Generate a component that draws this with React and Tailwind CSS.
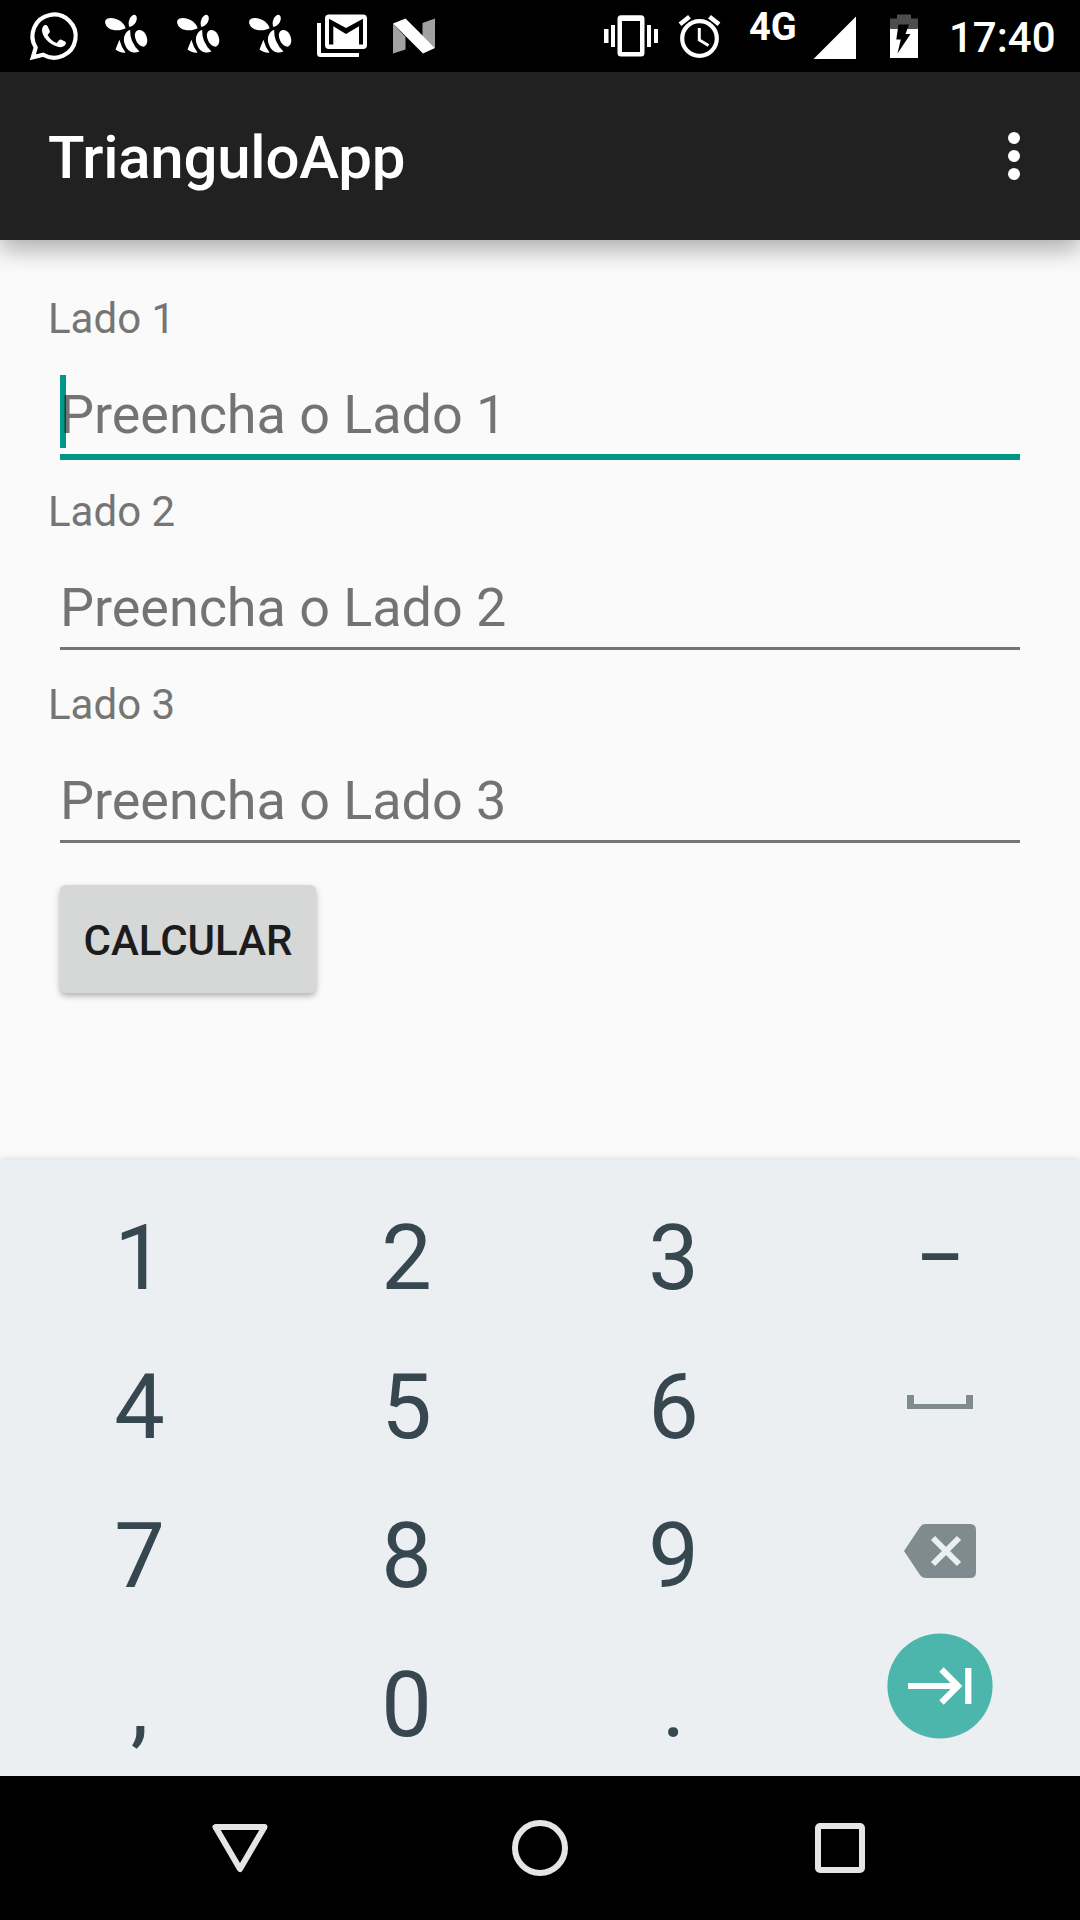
import React from "react";

const Call = () => (
  <svg className="h-[72px] w-[102px]" viewBox="0 0 102 72">
    <path d="M35.700 47.500A21.600 21.600 0 1 1 43.200 54.800L32.800 57.400Z" fill="none" stroke="#fff" strokeWidth="4.200" />
    <path d="M42 30.500C42 27 43.500 25 45.800 25Q47 25 47.600 26.300L49.700 30.800Q50.200 32 49.200 33.100L47.600 35Q50.800 40.800 56.700 43L59.300 40Q60 39.200 61 39.600L65.400 41.700Q66.200 42.200 65.900 43.300 65 47 60.500 47.200C54 47 42.500 39.500 42 30.500Z" fill="#fff" />
  </svg>
);

const Bee = () => (
  <svg className="h-[72px] w-[72px]" viewBox="102 0 72 72" fill="#fff">
    <path d="M105 21.500C106 16.500 115 17 121 21.500Q124.500 24.500 125.700 28.300C119 31.800 105.500 31.500 105 21.500Z" />
    <path d="M129.500 27C126.700 22 131 14.500 134.700 14.800 138.500 15.500 137.500 25 129.500 27Z" />
    <path d="M119.400 39.800Q121.500 47.500 125.500 52.600 119.500 53 115.500 49.500Z" />
    <path d="M130.200 30Q129.500 42 139.500 51.500C134 54 127.500 52.500 124.500 43.500 122.800 37.500 125.200 31 130.200 30Z" />
    <path d="M134.800 34.500C136 28 143 28.800 146 35 148.500 41 147 45.700 143.500 46.700 138.500 46 135 41 134.800 34.500Z" />
  </svg>
);

const Gmail = () => (
  <svg className="h-[72px] w-[72px]" viewBox="312 0 72 72">
    <path d="M319 23V53.500Q319 55 320.500 55H359" fill="none" stroke="#fff" strokeWidth="4" />
    <rect x="325" y="14.500" width="42" height="34.500" rx="4" fill="#fff" />
    <path d="M329 44.500V18.800L346 28 363 18.800V44.500H359V26.200L346 34 333.300 26.200V44.500Z" fill="#000" />
  </svg>
);

const Nougat = () => (
  <svg className="h-[72px] w-[72px]" viewBox="384 0 72 72">
    <path d="M393 23.500L405.500 37V49.500L393 53.500ZM422.500 23L435 18.500V48L422.500 36Z" fill="#a1a1a1" />
    <path d="M393 23.500L405.500 18.500 435 48 423 53.500Z" fill="#fff" />
  </svg>
);

const Vibrate = () => (
  <svg className="h-[72px] w-[72px]" viewBox="595 0 72 72" fill="#fff">
    <path fillRule="evenodd" d="M621 15.300H641Q644.500 15.300 644.500 19V53Q644.500 56.500 641 56.500H621Q617.500 56.500 617.500 53V19Q617.500 15.300 621 15.300ZM622 21V52H640V21Z" />
    <path d="M604 29h4.500v14H604ZM611 25h4v22h-4ZM647 25h4v22h-4ZM654 29h4v14h-4Z" />
  </svg>
);

const Alarm = () => (
  <svg className="h-[72px] w-[72px]" viewBox="663 0 72 72" fill="none" stroke="#fff">
    <circle cx="699.500" cy="38.500" r="17.300" strokeWidth="4.200" />
    <path d="M680 24.300L689.500 16.700M719 24.300L709.500 16.700" strokeWidth="4.500" />
    <path d="M699.300 28V40L708.500 45.500" strokeWidth="3" />
  </svg>
);

const Signal = () => (
  <svg className="h-[72px] w-[50px]" viewBox="811 0 50 72">
    <path d="M813.500 59L856 16.500V59Z" fill="#fff" />
  </svg>
);

const Battery = () => (
  <svg className="h-[72px] w-[48px]" viewBox="880 0 48 72">
    <path d="M890 29V18.500H897V14.500H911V18.500H918V29Z" fill="#4d4d4d" />
    <path d="M890 29H918V58H890Z" fill="#fff" />
    <path d="M898.500 24.500H909L905.500 34H910.500L897.500 53.500 900.800 39.500H896.300Z" fill="#000" />
  </svg>
);

function StatusBar() {
  return (
    <header className="flex h-[72px] items-start bg-black text-white">
      <Call />
      <Bee />
      <Bee />
      <Bee />
      <div className="-ml-[6px] flex">
        <Gmail />
        <Nougat />
      </div>
      <div className="ml-auto flex items-start">
        <Vibrate />
        <div className="-ml-1">
          <Alarm />
        </div>
        <span className="ml-[14px] mt-1 w-[49px] text-[38px] font-bold leading-[46px] whitespace-nowrap">4G</span>
        <div className="ml-[13px]">
          <Signal />
        </div>
        <div className="ml-[19px]">
          <Battery />
        </div>
        <span className="ml-[21px] mr-[24px] w-[107px] text-[42px] font-medium leading-[76px] whitespace-nowrap">17:40</span>
      </div>
    </header>
  );
}

function Field({ n, focused }) {
  return (
    <div className="h-[193px]">
      <label className="block h-[57px] pl-12 text-[42px] leading-[57px]">Lado {n}</label>
      <div
        className={
          focused
            ? "mx-[60px] mt-[28px] h-[85px] border-b-[6px] border-[#009688]"
            : "mx-[60px] mt-[28px] h-[82px] border-b-[3px] border-[#757575]"
        }
      >
        <div className="flex h-[73px] text-[54px]">
          {focused && <span className="-mr-[6px] h-full w-[6px] shrink-0 bg-[#009688]" />}
          <span className="relative leading-[79px] tracking-[-0.06px] text-black/54 whitespace-nowrap">Preencha o Lado {n}</span>
        </div>
      </div>
    </div>
  );
}

const Digit = ({ children }) => (
  <button className="flex h-[149px] items-center justify-center text-[90px] leading-[106px]">{children}</button>
);

export default function App() {
  return (
    <div className="flex h-[1920px] w-[1080px] flex-col overflow-hidden bg-[#fafafa] font-['Roboto',sans-serif]">
      <StatusBar />
      <div className="relative z-10 flex h-[168px] shrink-0 items-center justify-between bg-[#212121] pl-12 pr-[60px] shadow-[0_10px_22px_rgba(0,0,0,0.3)]">
        <h1 className="pt-1 text-[60px] font-medium leading-[70px] tracking-[-0.25px] text-white">TrianguloApp</h1>
        <div className="flex flex-col gap-[6px]">
          <i className="h-3 w-3 rounded-full bg-white" />
          <i className="h-3 w-3 rounded-full bg-white" />
          <i className="h-3 w-3 rounded-full bg-white" />
        </div>
      </div>
      <main className="h-[920px] shrink-0 pt-[50px] text-[#757575]">
        <Field n="1" focused />
        <Field n="2" />
        <Field n="3" />
        <button className="ml-[60px] mt-4 flex h-[108px] w-[256px] items-center justify-center rounded-[6px] bg-[#d6d7d7] pt-[2px] text-[42px] font-medium text-[#1c1c1c] shadow-[0_3px_6px_rgba(0,0,0,0.3)]">
          CALCULAR
        </button>
      </main>
      <section className="grid h-[616px] shrink-0 grid-cols-[267px_267px_267px_267px] content-start bg-[#ebeff2] px-[6px] pt-[24px] text-[#37474f] shadow-[0_-2px_6px_rgba(0,0,0,0.1)]">
        <Digit>1</Digit>
        <Digit>2</Digit>
        <Digit>3</Digit>
        <Digit>
          <span className="scale-x-[0.82]">–</span>
        </Digit>
        <Digit>4</Digit>
        <Digit>5</Digit>
        <Digit>6</Digit>
        <button className="flex h-[149px] justify-center pr-px pt-[62px]">
          <svg className="h-[14px] w-[66px]" viewBox="0 0 66 14">
            <path d="M0 0H7V9H59V0H66V14H0Z" fill="#808b8f" />
          </svg>
        </button>
        <Digit>7</Digit>
        <Digit>8</Digit>
        <Digit>9</Digit>
        <button className="flex h-[149px] justify-center pr-px pt-[42px]">
          <svg className="h-[54px] w-[72px]" viewBox="0 0 72 54">
            <path d="M21 0H66Q72 0 72 6V48Q72 54 66 54H21Q18 54 16 51L0 27 16 3Q18 0 21 0Z" fill="#808b8f" />
            <path d="M29 14L55 40M55 14L29 40" stroke="#ebeff2" strokeWidth="6" />
          </svg>
        </button>
        <Digit>,</Digit>
        <Digit>0</Digit>
        <Digit>.</Digit>
        <button className="flex h-[149px] justify-center pr-px pt-[2px]">
          <svg className="h-[106px] w-[106px]" viewBox="0 0 106 106">
            <circle cx="53" cy="53" r="52.600" fill="#4db6ac" />
            <path d="M21 53H71M54.500 36.500L71 53 54.500 69.500M81.300 35V71" fill="none" stroke="#fff" strokeWidth="6.200" />
          </svg>
        </button>
      </section>
      <nav className="grid h-[144px] shrink-0 grid-cols-[300px_300px_300px] content-center justify-center bg-black">
        <svg className="m-auto h-[60px] w-[60px]" viewBox="0 0 60 60">
          <path d="M5.500 9H54.500L30 51Z" fill="none" stroke="#e5e5e5" strokeWidth="6" strokeLinejoin="round" />
        </svg>
        <svg className="m-auto h-[60px] w-[60px]" viewBox="0 0 60 60">
          <circle cx="30" cy="30" r="25" fill="none" stroke="#e5e5e5" strokeWidth="6" />
        </svg>
        <svg className="m-auto h-[60px] w-[60px]" viewBox="0 0 60 60">
          <rect x="8" y="8" width="44" height="44" rx="2" fill="none" stroke="#e5e5e5" strokeWidth="6" />
        </svg>
      </nav>
    </div>
  );
}
